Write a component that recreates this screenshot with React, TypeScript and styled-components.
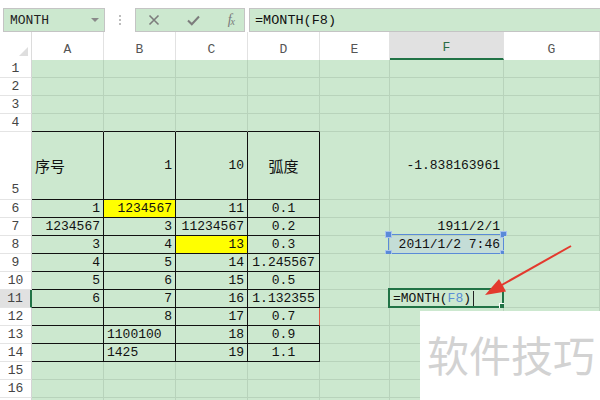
import React from 'react';
import styled, { createGlobalStyle, css } from 'styled-components';

const GREEN = '#cce8cf';
const GRID = '#b8d3bb';
const MONO = '"Liberation Mono", "DejaVu Sans Mono", monospace';
const CJK = '"Noto Sans CJK SC", "Noto Sans", sans-serif';
const XLGREEN = '#217346';
const REFBLUE = '#5a8ad8';

const GlobalStyle = createGlobalStyle`
  html, body { margin: 0; padding: 0; background: #fff; overflow: hidden; }
  #root { width: 600px; height: 400px; }
`;

const Page = styled.div`
  position: relative;
  width: 600px;
  height: 400px;
  overflow: hidden;
  background: #fff;
  font-family: ${MONO};
  color: #111;
`;

/* ---------- formula bar ---------- */
const FormulaBar = styled.div`
  display: flex;
  align-items: flex-start;
  height: 32px;
  padding: 8px 0 0 3px;
  box-sizing: border-box;
`;

const NameBox = styled.div`
  width: 102px;
  height: 24px;
  box-sizing: border-box;
  background: ${GREEN};
  border: 1px solid #c4c4c4;
  display: flex;
  align-items: center;
  justify-content: space-between;
  padding: 0 5px 0 6px;
  font-size: 13px;
  color: #222;
`;

const Caret = styled.span`
  width: 0;
  height: 0;
  border-left: 4px solid transparent;
  border-right: 4px solid transparent;
  border-top: 4px solid #8a8a8a;
`;

const Dots = styled.div`
  width: 30px;
  height: 24px;
  display: flex;
  flex-direction: column;
  align-items: center;
  justify-content: center;
  gap: 2px;
`;

const Dot = styled.span`
  width: 2px;
  height: 2px;
  background: #bdbdbd;
`;

const ButtonGroup = styled.div`
  width: 110px;
  height: 24px;
  box-sizing: border-box;
  background: ${GREEN};
  border: 1px solid #c4c4c4;
  display: flex;
  align-items: center;
  justify-content: space-between;
  padding: 0 10px 0 12px;
`;

const Fx = styled.span`
  font-family: "Liberation Serif", serif;
  font-style: italic;
  font-size: 14px;
  color: #7a7a7a;
  letter-spacing: -1px;
  sub {
    font-size: 10px;
    vertical-align: -1px;
  }
`;

const FormulaInput = styled.div`
  margin-left: 4px;
  flex: 1;
  height: 24px;
  box-sizing: border-box;
  background: ${GREEN};
  border: 1px solid #c4c4c4;
  border-right: none;
  display: flex;
  align-items: center;
  padding-left: 5px;
  font-size: 13.5px;
  color: #111;
`;

/* ---------- sheet ---------- */
const Sheet = styled.div`
  display: grid;
  grid-template-columns: 32px 72px 72px 72px 72px 70px 114px 96px;
  grid-template-rows: 28px repeat(4, 18px) 68px repeat(12, 18px);
`;

const Corner = styled.div`
  position: relative;
  background: #fff;
  border-right: 1px solid #dcdcdc;
  &::after {
    content: '';
    position: absolute;
    right: 3px;
    bottom: 4px;
    width: 0;
    height: 0;
    border-left: 9px solid transparent;
    border-bottom: 9px solid #dedede;
  }
`;

const ColHeader = styled.div<{ $active?: boolean }>`
  display: flex;
  align-items: flex-end;
  justify-content: center;
  padding-bottom: 3px;
  box-sizing: border-box;
  background: #fff;
  border-right: 1px solid #e2e2e2;
  font-size: 13px;
  color: #555;
  ${(p) =>
    p.$active &&
    css`
      background: #e1e1e1;
      border-bottom: 2px solid ${XLGREEN};
      color: #2a6a45;
    `}
`;

const RowHeader = styled.div<{ $active?: boolean; $bottom?: boolean }>`
  display: flex;
  align-items: ${(p) => (p.$bottom ? 'flex-end' : 'center')};
  justify-content: center;
  box-sizing: border-box;
  background: #fff;
  border-bottom: 1px solid #e4e4e4;
  border-right: 1px solid #d4d4d4;
  font-size: 13px;
  color: #444;
  padding-bottom: ${(p) => (p.$bottom ? '2px' : '0')};
  ${(p) =>
    p.$active &&
    css`
      background: #e1e1e1;
      border-right: 2px solid ${XLGREEN};
    `}
`;

type Align = 'l' | 'r' | 'c';

const Cell = styled.div<{
  $align: Align;
  $yellow?: boolean;
  $bRight?: string;
  $bBottom?: string;
  $cjk?: boolean;
  $ref?: boolean;
}>`
  position: relative;
  display: flex;
  align-items: center;
  justify-content: ${(p) => (p.$align === 'l' ? 'flex-start' : p.$align === 'c' ? 'center' : 'flex-end')};
  padding: 0 3px 0 3px;
  box-sizing: border-box;
  background: ${(p) => (p.$yellow ? '#ffff00' : p.$ref ? '#c4ddd7' : GREEN)};
  border-right: 1px solid ${(p) => p.$bRight || GRID};
  border-bottom: 1px solid ${(p) => p.$bBottom || GRID};
  font-family: ${(p) => (p.$cjk ? CJK : MONO)};
  font-size: ${(p) => (p.$cjk ? '15px' : '13px')};
  white-space: nowrap;
  overflow: visible;
  color: #111;
`;

const RefBox = styled.div`
  position: absolute;
  left: -2px;
  top: -2px;
  right: -1px;
  bottom: -1px;
  border: 1.5px solid ${REFBLUE};
  pointer-events: none;
`;

const Handle = styled.span<{ $x: 'l' | 'r'; $y: 't' | 'b' }>`
  position: absolute;
  width: 5px;
  height: 5px;
  background: ${REFBLUE};
  border: 1px solid #a8c3ee;
  ${(p) => (p.$x === 'l' ? 'left: -4px;' : 'right: -4px;')}
  ${(p) => (p.$y === 't' ? 'top: -4px;' : 'bottom: -4px;')}
`;

const EditBox = styled.div`
  position: absolute;
  left: -2px;
  top: -2px;
  right: -1px;
  bottom: -1px;
  border: 2px solid ${XLGREEN};
  pointer-events: none;
  &::after {
    content: '';
    position: absolute;
    right: -4px;
    bottom: -4px;
    width: 5px;
    height: 5px;
    background: ${XLGREEN};
    border: 1px solid #fff;
  }
`;

const RefText = styled.span`
  color: #5b8fd6;
`;

const CursorBar = styled.span`
  display: inline-block;
  width: 1px;
  height: 15px;
  background: #222;
  margin-left: 2px;
  vertical-align: middle;
`;

const Arrow = styled.svg`
  position: absolute;
  left: 0;
  top: 0;
  pointer-events: none;
`;

const Watermark = styled.div`
  position: absolute;
  left: 420px;
  top: 311px;
  width: 180px;
  height: 89px;
  background: #fff;
  display: flex;
  align-items: center;
  padding-left: 7px;
  padding-bottom: 4px;
  box-sizing: border-box;
  font-family: ${CJK};
  font-size: 42px;
  color: #d2d2d2;
  white-space: nowrap;
`;

/* ---------- data ---------- */
type CellDef = { v: React.ReactNode; a?: Align; y?: boolean; cjk?: boolean };
type ColKey = 'A' | 'B' | 'C' | 'D' | 'E' | 'F' | 'G';
const COLS: ColKey[] = ['A', 'B', 'C', 'D', 'E', 'F', 'G'];

const DATA: Record<number, Partial<Record<ColKey, CellDef>>> = {
  5: {
    A: { v: '序号', a: 'l', cjk: true },
    B: { v: '1' },
    C: { v: '10' },
    D: { v: '弧度', a: 'c', cjk: true },
    F: { v: '-1.838163961' },
  },
  6: { A: { v: '1' }, B: { v: '1234567', y: true }, C: { v: '11' }, D: { v: '0.1', a: 'c' } },
  7: {
    A: { v: '1234567' },
    B: { v: '3' },
    C: { v: '11234567' },
    D: { v: '0.2', a: 'c' },
    F: { v: '1911/2/1' },
  },
  8: { A: { v: '3' }, B: { v: '4' }, C: { v: '13', y: true }, D: { v: '0.3', a: 'c' }, F: { v: '2011/1/2 7:46' } },
  9: { A: { v: '4' }, B: { v: '5' }, C: { v: '14' }, D: { v: '1.245567', a: 'c' } },
  10: { A: { v: '5' }, B: { v: '6' }, C: { v: '15' }, D: { v: '0.5', a: 'c' } },
  11: { A: { v: '6' }, B: { v: '7' }, C: { v: '16' }, D: { v: '1.132355', a: 'c' } },
  12: { B: { v: '8' }, C: { v: '17' }, D: { v: '0.7', a: 'c' } },
  13: { B: { v: '1100100', a: 'l' }, C: { v: '18' }, D: { v: '0.9', a: 'c' } },
  14: { B: { v: '1425', a: 'l' }, C: { v: '19' }, D: { v: '1.1', a: 'c' } },
};

const TABLE_COLS: ColKey[] = ['A', 'B', 'C', 'D'];

function renderCell(r: number, c: ColKey) {
  const def = DATA[r]?.[c];
  const inTable = r >= 5 && r <= 14 && TABLE_COLS.includes(c);
  let bRight: string | undefined = inTable ? '#111' : undefined;
  const bBottom = (inTable || (r === 4 && TABLE_COLS.includes(c))) ? '#111' : undefined;
  if (r === 12 && c === 'D') bRight = '#e0604c';

  const isRef = r === 8 && c === 'F';
  const isEdit = r === 11 && c === 'F';

  return (
    <Cell
      key={`${c}${r}`}
      $align={isEdit ? 'l' : def?.a || 'r'}
      $yellow={def?.y}
      $cjk={def?.cjk}
      $bRight={bRight}
      $bBottom={bBottom}
      $ref={isRef}
    >
      {isEdit ? (
        <>
          <span>
            =MONTH(<RefText>F8</RefText>)
          </span>
          <CursorBar />
          <EditBox />
        </>
      ) : (
        def?.v
      )}
      {isRef && (
        <RefBox>
          <Handle $x="l" $y="t" />
          <Handle $x="r" $y="t" />
          <Handle $x="l" $y="b" />
          <Handle $x="r" $y="b" />
        </RefBox>
      )}
    </Cell>
  );
}

const ROWS = Array.from({ length: 17 }, (_, i) => i + 1);

export default function App() {
  return (
    <Page>
      <GlobalStyle />
      <FormulaBar>
        <NameBox>
          <span>MONTH</span>
          <Caret />
        </NameBox>
        <Dots>
          <Dot />
          <Dot />
          <Dot />
        </Dots>
        <ButtonGroup>
          <svg width="12" height="12" viewBox="0 0 12 12">
            <path d="M1.5 1.5 L10.5 10.5 M10.5 1.5 L1.5 10.5" stroke="#7c7c7c" strokeWidth="1.6" fill="none" />
          </svg>
          <svg width="13" height="11" viewBox="0 0 13 11">
            <path d="M1 5.5 L4.8 9.3 L12 1.5" stroke="#7c7c7c" strokeWidth="2" fill="none" />
          </svg>
          <Fx>
            f<sub>x</sub>
          </Fx>
        </ButtonGroup>
        <FormulaInput>=MONTH(F8)</FormulaInput>
      </FormulaBar>
      <Sheet>
        <Corner />
        {COLS.map((c) => (
          <ColHeader key={c} $active={c === 'F'}>
            {c}
          </ColHeader>
        ))}
        {ROWS.map((r) => (
          <React.Fragment key={r}>
            <RowHeader $active={r === 11} $bottom={r === 5}>
              {r <= 16 ? r : null}
            </RowHeader>
            {COLS.map((c) => renderCell(r, c))}
          </React.Fragment>
        ))}
      </Sheet>
      <Arrow width="600" height="400" viewBox="0 0 600 400">
        <line x1="571" y1="246" x2="500" y2="286" stroke="#e33a2e" strokeWidth="2" />
        <polygon points="485,295 506,291.5 499,279" fill="#e33a2e" />
      </Arrow>
      <Watermark>软件技巧</Watermark>
    </Page>
  );
}
